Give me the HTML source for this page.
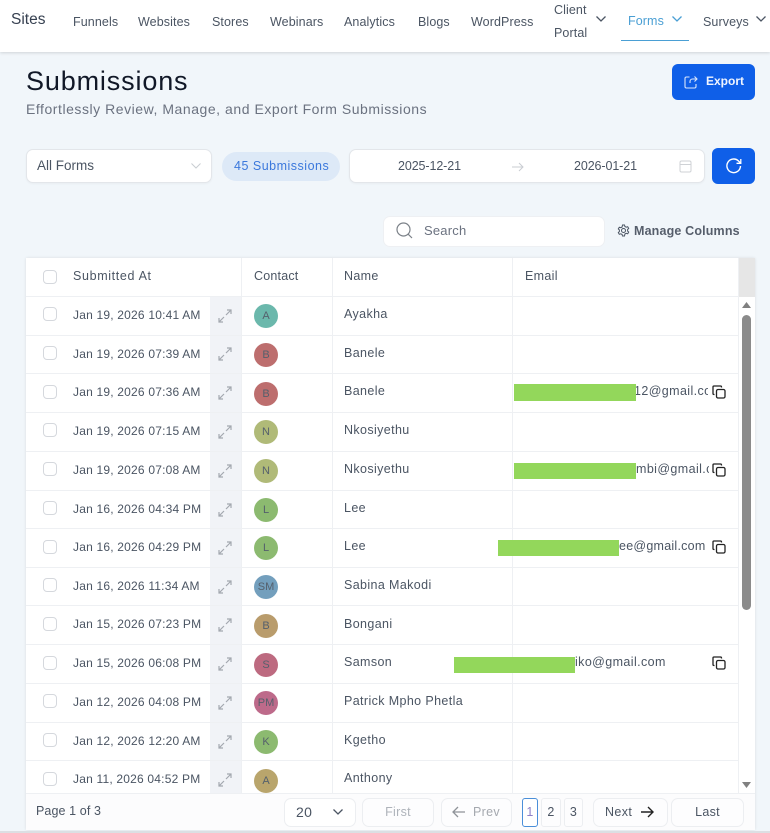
<!DOCTYPE html>
<html><head><meta charset="utf-8"><style>
*{box-sizing:border-box}
html,body{margin:0;padding:0;width:770px;height:833px;overflow:hidden;background:#f1f6fa;font-family:"Liberation Sans",sans-serif}
.a{position:absolute;white-space:nowrap}
.nav{font-size:12.5px;color:#4b5563;letter-spacing:.1px;line-height:16px}
.hl{position:absolute;left:26px;width:713px;height:1px;background:#eef0f3}
.vl{position:absolute;top:258px;height:535px;width:1px;background:#eef0f3}
.cb{position:absolute;left:43px;width:14px;height:14px;border:1px solid #d5d8dd;border-radius:4px;background:#fff}
.d{position:absolute;left:73px;font-size:12px;color:#4b5563;letter-spacing:.2px;white-space:nowrap;line-height:16px}
.n{position:absolute;left:344px;font-size:12.5px;color:#4b5563;letter-spacing:.38px;white-space:nowrap;line-height:16px}
.av{position:absolute;left:254px;width:24px;height:24px;border-radius:50%;font-size:11px;color:#55606c;text-align:center;line-height:24px}
.ex{position:absolute;left:218px;width:14px;height:14px}
.g{position:absolute;background:#93d75b}
.e{position:absolute;font-size:12.5px;color:#4b5563;letter-spacing:.4px;white-space:nowrap;line-height:16px}
.cp{position:absolute;left:712px;width:14px;height:14px}
.btn{position:absolute;top:798px;height:29px;border:1px solid #eceef1;border-radius:7px;background:#fdfdfe;font-size:12.5px;text-align:center;line-height:27px;color:#4b5563;letter-spacing:.3px}
.dis{color:#aeb3ba}
</style></head><body>
<svg width="0" height="0" style="position:absolute"><defs>
<g id="ex" fill="none" stroke="#a3a8af" stroke-width="1.2"><path d="M8 6 13 1M9 1h4v4M6 8 1 13M1 9v4h4"/></g>
<g id="cp" fill="none" stroke="#222" stroke-width="1.3"><rect x="4.500" y="4.500" width="8.500" height="8.500" rx="1.500"/><path d="M2.500 9.500H2A1 1 0 0 1 1 8.500V2A1 1 0 0 1 2 1h6.500a1 1 0 0 1 1 1v.5"/></g>
</defs></svg>

<!-- top nav -->
<div class="a" style="left:0;top:0;width:770px;height:52px;background:#fff;box-shadow:0 1px 3px rgba(0,0,0,.14)"></div>
<div class="a" style="left:11px;top:11px;font-size:15.5px;color:#374151;line-height:18px">Sites</div>
<div class="a nav" style="left:73px;top:14px">Funnels</div>
<div class="a nav" style="left:138px;top:14px">Websites</div>
<div class="a nav" style="left:212px;top:14px">Stores</div>
<div class="a nav" style="left:270px;top:14px">Webinars</div>
<div class="a nav" style="left:344px;top:14px">Analytics</div>
<div class="a nav" style="left:418px;top:14px">Blogs</div>
<div class="a nav" style="left:471px;top:14px">WordPress</div>
<div class="a nav" style="left:554px;top:2px">Client</div>
<div class="a nav" style="left:554px;top:25px">Portal</div>
<svg class="a" style="left:595px;top:14px" width="12" height="10"><path d="M1.500 2.500 6 7l4.500-4.500" fill="none" stroke="#4b5563" stroke-width="1.3"/></svg>
<div class="a nav" style="left:628px;top:13px;color:#4a9fd4">Forms</div>
<svg class="a" style="left:671px;top:14px" width="12" height="10"><path d="M1.500 2.500 6 7l4.500-4.500" fill="none" stroke="#4a9fd4" stroke-width="1.300"/></svg>
<div class="a" style="left:621px;top:40px;width:68px;height:1px;background:#4a9fd4"></div>
<div class="a nav" style="left:703px;top:14px">Surveys</div>
<svg class="a" style="left:755px;top:14px" width="12" height="10"><path d="M1.500 2.500 6 7l4.500-4.500" fill="none" stroke="#4b5563" stroke-width="1.300"/></svg>

<!-- heading -->
<div class="a" style="left:26px;top:64px;font-size:27px;line-height:34px;color:#111827;letter-spacing:.85px">Submissions</div>
<div class="a" style="left:26px;top:100px;font-size:14px;line-height:18px;color:#6b7280;letter-spacing:.54px">Effortlessly Review, Manage, and Export Form Submissions</div>
<div class="a" style="left:672px;top:64px;width:83px;height:36px;background:#0f5fe8;border-radius:6px"></div>
<svg class="a" style="left:684px;top:75px" width="14" height="14" fill="none" stroke="#dbe7fb" stroke-width="1.100"><path d="M5.500 2H2.500A1.500 1.500 0 0 0 1 3.500v8A1.500 1.500 0 0 0 2.500 13h8a1.500 1.500 0 0 0 1.500-1.500V9"/><path d="M6 8V6.500A2.500 2.500 0 0 1 8.500 4H13M10.500 1.500 13 4l-2.500 2.500"/></svg>
<div class="a" style="left:706px;top:73px;font-size:12px;font-weight:700;color:#f0f5ff;line-height:16px">Export</div>

<!-- filters -->
<div class="a" style="left:26px;top:149px;width:186px;height:34px;background:#fff;border:1px solid #e3e6ea;border-radius:7px;box-shadow:0 1px 2px rgba(0,0,0,.04)"></div>
<div class="a" style="left:37px;top:158px;font-size:13.5px;line-height:16px;color:#4b5563">All Forms</div>
<svg class="a" style="left:190px;top:161px" width="12" height="10"><path d="M1.500 2.500 6 7l4.500-4.500" fill="none" stroke="#c9cdd2" stroke-width="1"/></svg>
<div class="a" style="left:222px;top:152px;width:118px;height:29px;border-radius:15px;background:#dde9f7"></div>
<div class="a" style="left:234px;top:158px;font-size:12.500px;line-height:16px;color:#3b78dc;letter-spacing:.5px">45 Submissions</div>
<div class="a" style="left:349px;top:149px;width:356px;height:34px;background:#fff;border:1px solid #e3e6ea;border-radius:7px;box-shadow:0 1px 2px rgba(0,0,0,.04)"></div>
<div class="a" style="left:398px;top:158px;font-size:12.500px;line-height:16px;color:#4b5563;letter-spacing:-.1px">2025-12-21</div>
<svg class="a" style="left:511px;top:160px" width="14" height="14" fill="none" stroke="#c9cdd2" stroke-width="1"><path d="M1 7h11M8 3l4 4-4 4"/></svg>
<div class="a" style="left:574px;top:158px;font-size:12.500px;line-height:16px;color:#4b5563;letter-spacing:-.1px">2026-01-21</div>
<svg class="a" style="left:679px;top:160px" width="13" height="13" fill="none" stroke="#cfd2d6" stroke-width="1"><rect x="1" y="1" width="11" height="11" rx="1.500"/><path d="M1 4.500h11"/></svg>
<div class="a" style="left:712px;top:148px;width:43px;height:36px;background:#0f5fe8;border-radius:6px"></div>
<svg class="a" style="left:725px;top:157px" width="18" height="18" fill="none" stroke="#fff" stroke-width="1.400"><path d="M15.500 9A6.800 6.800 0 1 1 13.500 4L15.500 6"/><path d="M15.800 2v4.300h-4.300" stroke-width="1.300"/></svg>

<!-- search -->
<div class="a" style="left:383px;top:216px;width:222px;height:31px;background:#fff;border:1px solid #eef0f3;border-radius:7px"></div>
<svg class="a" style="left:396px;top:222px" width="18" height="18" fill="none" stroke="#7b8188" stroke-width="1.200"><circle cx="7.500" cy="7.500" r="6.500"/><path d="M12.300 12.300 16 16"/></svg>
<div class="a" style="left:424px;top:223px;font-size:13px;line-height:16px;color:#6b7280;letter-spacing:.2px">Search</div>
<svg class="a" style="left:617px;top:224px" width="13" height="13" viewBox="0 0 13 13" fill="none" stroke="#4b5563" stroke-width="1"><circle cx="6.500" cy="6.500" r="2"/><path d="M5.500 1h2l.4 1.500 1.300.7 1.500-.5 1 1.700-1.100 1.100v1.500l1.100 1.100-1 1.700-1.500-.5-1.300.7L7.500 12h-2l-.4-1.500-1.300-.7-1.500.5-1-1.700 1.100-1.100V6L1.300 4.900l1-1.700 1.500.5 1.300-.7z"/></svg>
<div class="a" style="left:634px;top:223px;font-size:12.500px;font-weight:700;line-height:16px;color:#565e6b;letter-spacing:.16px">Manage Columns</div>

<!-- table -->
<div class="a" style="left:26px;top:258px;width:729px;height:572px;background:#fff;box-shadow:0 0 3px rgba(0,0,0,.1)"></div>
<div class="a" style="left:210px;top:297px;width:32px;height:496px;background:#f1f3f7"></div>
<div class="vl" style="left:241px"></div>
<div class="vl" style="left:332px"></div>
<div class="vl" style="left:512px"></div>
<div class="vl" style="left:738px"></div>
<div class="a" style="left:739px;top:258px;width:16px;height:39px;background:#e6e6e6"></div>

<div class="cb" style="top:270px"></div>
<div class="a" style="left:73px;top:268px;font-size:12.500px;line-height:16px;color:#4b5563;letter-spacing:.65px">Submitted At</div>
<div class="a" style="left:254px;top:268px;font-size:12.500px;line-height:16px;color:#4b5563;letter-spacing:.2px">Contact</div>
<div class="a" style="left:344px;top:268px;font-size:12.500px;line-height:16px;color:#4b5563;letter-spacing:.32px">Name</div>
<div class="a" style="left:525px;top:268px;font-size:12.500px;line-height:16px;color:#4b5563;letter-spacing:.32px">Email</div>

<div class="hl" style="top:296px"></div><div class="hl" style="top:335px"></div><div class="hl" style="top:373px"></div><div class="hl" style="top:412px"></div><div class="hl" style="top:451px"></div><div class="hl" style="top:490px"></div><div class="hl" style="top:528px"></div><div class="hl" style="top:567px"></div><div class="hl" style="top:605px"></div><div class="hl" style="top:644px"></div><div class="hl" style="top:683px"></div><div class="hl" style="top:722px"></div><div class="hl" style="top:760px"></div>

<div class="cb" style="top:307px"></div><div class="d" style="top:307px">Jan 19, 2026 10:41 AM</div><svg class="ex" style="top:309px"><use href="#ex"/></svg><div class="av" style="top:304px;background:#6bb8ac">A</div><div class="n" style="top:306px">Ayakha</div>
<div class="cb" style="top:346px"></div><div class="d" style="top:346px">Jan 19, 2026 07:39 AM</div><svg class="ex" style="top:347px"><use href="#ex"/></svg><div class="av" style="top:343px;background:#bd6e6e">B</div><div class="n" style="top:345px">Banele</div>
<div class="cb" style="top:385px"></div><div class="d" style="top:384px">Jan 19, 2026 07:36 AM</div><svg class="ex" style="top:386px"><use href="#ex"/></svg><div class="av" style="top:382px;background:#bd6e6e">B</div><div class="n" style="top:383px">Banele</div>
<div class="cb" style="top:423px"></div><div class="d" style="top:423px">Jan 19, 2026 07:15 AM</div><svg class="ex" style="top:425px"><use href="#ex"/></svg><div class="av" style="top:420px;background:#b0ba78">N</div><div class="n" style="top:422px">Nkosiyethu</div>
<div class="cb" style="top:462px"></div><div class="d" style="top:462px">Jan 19, 2026 07:08 AM</div><svg class="ex" style="top:464px"><use href="#ex"/></svg><div class="av" style="top:459px;background:#b0ba78">N</div><div class="n" style="top:461px">Nkosiyethu</div>
<div class="cb" style="top:501px"></div><div class="d" style="top:501px">Jan 16, 2026 04:34 PM</div><svg class="ex" style="top:503px"><use href="#ex"/></svg><div class="av" style="top:498px;background:#8cba70">L</div><div class="n" style="top:500px">Lee</div>
<div class="cb" style="top:540px"></div><div class="d" style="top:539px">Jan 16, 2026 04:29 PM</div><svg class="ex" style="top:541px"><use href="#ex"/></svg><div class="av" style="top:536px;background:#8cba70">L</div><div class="n" style="top:538px">Lee</div>
<div class="cb" style="top:578px"></div><div class="d" style="top:578px">Jan 16, 2026 11:34 AM</div><svg class="ex" style="top:580px"><use href="#ex"/></svg><div class="av" style="top:575px;background:#739fbd">SM</div><div class="n" style="top:577px">Sabina Makodi</div>
<div class="cb" style="top:617px"></div><div class="d" style="top:616px">Jan 15, 2026 07:23 PM</div><svg class="ex" style="top:618px"><use href="#ex"/></svg><div class="av" style="top:614px;background:#b99c6c">B</div><div class="n" style="top:616px">Bongani</div>
<div class="cb" style="top:656px"></div><div class="d" style="top:655px">Jan 15, 2026 06:08 PM</div><svg class="ex" style="top:657px"><use href="#ex"/></svg><div class="av" style="top:653px;background:#bd6a80">S</div><div class="n" style="top:654px">Samson</div>
<div class="cb" style="top:694px"></div><div class="d" style="top:694px">Jan 12, 2026 04:08 PM</div><svg class="ex" style="top:696px"><use href="#ex"/></svg><div class="av" style="top:691px;background:#bd6a8a">PM</div><div class="n" style="top:693px">Patrick Mpho Phetla</div>
<div class="cb" style="top:733px"></div><div class="d" style="top:733px">Jan 12, 2026 12:20 AM</div><svg class="ex" style="top:735px"><use href="#ex"/></svg><div class="av" style="top:730px;background:#8cba70">K</div><div class="n" style="top:732px">Kgetho</div>
<div class="cb" style="top:772px"></div><div class="d" style="top:771px">Jan 11, 2026 04:52 PM</div><svg class="ex" style="top:773px"><use href="#ex"/></svg><div class="av" style="top:769px;background:#b9a56c">A</div><div class="n" style="top:770px">Anthony</div>

<!-- emails -->
<div class="e" style="left:634px;top:383px;width:74px;overflow:hidden">12@gmail.com</div>
<div class="g" style="left:514px;top:384px;width:122px;height:17px"></div>
<svg class="cp" style="top:385px"><use href="#cp"/></svg>
<div class="e" style="left:636px;top:461px;width:73px;overflow:hidden">mbi@gmail.com</div>
<div class="g" style="left:514px;top:463px;width:122px;height:16px"></div>
<svg class="cp" style="top:463px"><use href="#cp"/></svg>
<div class="e" style="left:619px;top:538px;letter-spacing:.25px">ee@gmail.com</div>
<div class="g" style="left:498px;top:540px;width:121px;height:16px"></div>
<svg class="cp" style="top:540px"><use href="#cp"/></svg>
<div class="e" style="left:575px;top:654px">iko@gmail.com</div>
<div class="g" style="left:454px;top:657px;width:121px;height:16px"></div>
<svg class="cp" style="top:656px"><use href="#cp"/></svg>

<!-- scrollbar -->
<svg class="a" style="left:741px;top:301px" width="11" height="8"><path d="M5.500 1 10 7H1z" fill="#808080"/></svg>
<div class="a" style="left:742px;top:315px;width:9px;height:295px;background:#8b8b8b;border-radius:5px"></div>
<svg class="a" style="left:741px;top:781px" width="11" height="8"><path d="M1 1h9L5.500 7z" fill="#808080"/></svg>

<!-- footer -->
<div class="a" style="left:26px;top:793px;width:729px;height:37px;background:#fcfcfd;border-top:1px solid #eef0f3"></div>
<div class="a" style="left:36px;top:803px;font-size:12.500px;line-height:16px;color:#4b5563;letter-spacing:.1px">Page 1 of 3</div>
<div class="btn" style="left:284px;width:72px;text-align:left;padding-left:11px;font-size:14px;background:#fff">20</div>
<svg class="a" style="left:332px;top:807px" width="12" height="10"><path d="M1.500 2.500 6 7l4.500-4.500" fill="none" stroke="#4b5563" stroke-width="1.300"/></svg>
<div class="btn dis" style="left:362px;width:72px">First</div>
<div class="btn dis" style="left:441px;width:71px;padding-left:20px;color:#a5a9af">Prev</div>
<svg class="a" style="left:451px;top:805px" width="15" height="14" fill="none" stroke="#8f9399" stroke-width="1.300"><path d="M14 7H2M7 2 2 7l5 5"/></svg>
<div class="btn" style="left:522px;width:16px;border-color:#4a8fd9;border-radius:3px;color:#8d7fc7;background:#fff;padding:0">1</div>
<div class="btn" style="left:541px;width:20px;border-radius:3px">2</div>
<div class="btn" style="left:564px;width:19px;border-radius:3px">3</div>
<div class="btn" style="left:593px;width:75px;text-align:left;padding-left:11px;letter-spacing:.4px">Next</div>
<svg class="a" style="left:640px;top:805px" width="15" height="14" fill="none" stroke="#222" stroke-width="1.400"><path d="M1 7h12M8 2l5 5-5 5"/></svg>
<div class="btn" style="left:671px;width:73px">Last</div>
<div class="a" style="left:0;top:831px;width:770px;height:2px;background:#dcdfe3"></div>
</body></html>
